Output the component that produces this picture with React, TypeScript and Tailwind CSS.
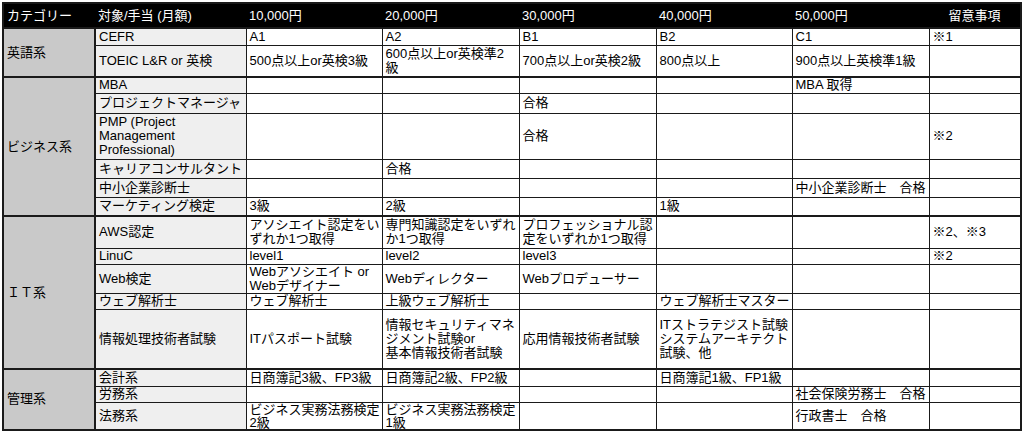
type Item = { label: string; cells: string[]; note?: string; h: string; tight?: boolean };
type Group = { name: string; items: Item[] };

const groups: Group[] = [
  {
    name: "英語系",
    items: [
      { label: "CEFR", cells: ["A1", "A2", "B1", "B2", "C1"], note: "※1", h: "h-[17px]" },
      {
        label: "TOEIC L&R or 英検",
        cells: ["500点以上or英検3級", "600点以上or英検準2\n級", "700点以上or英検2級", "800点以上", "900点以上英検準1級"],
        h: "h-[32px]",
      },
    ],
  },
  {
    name: "ビジネス系",
    items: [
      { label: "MBA", cells: ["", "", "", "", "MBA 取得"], h: "h-[16px]" },
      { label: "プロジェクトマネージャ", cells: ["", "", "合格", "", ""], h: "h-[20px]" },
      { label: "PMP (Project\nManagement\nProfessional)", cells: ["", "", "合格", "", ""], note: "※2", h: "h-[46px]" },
      { label: "キャリアコンサルタント", cells: ["", "合格", "", "", ""], h: "h-[19px]" },
      { label: "中小企業診断士", cells: ["", "", "", "", "中小企業診断士　合格"], h: "h-[19px]" },
      { label: "マーケティング検定", cells: ["3級", "2級", "", "1級", ""], h: "h-[19px]" },
    ],
  },
  {
    name: "ＩＴ系",
    items: [
      {
        label: "AWS認定",
        cells: ["アソシエイト認定をい\nずれか1つ取得", "専門知識認定をいずれ\nか1つ取得", "プロフェッショナル認\n定をいずれか1つ取得", "", ""],
        note: "※2、※3",
        h: "h-[32px]",
      },
      { label: "LinuC", cells: ["level1", "level2", "level3", "", ""], note: "※2", h: "h-[16px]" },
      { label: "Web検定", cells: ["Webアソシエイト or\nWebデザイナー", "Webディレクター", "Webプロデューサー", "", ""], h: "h-[29px]" },
      { label: "ウェブ解析士", cells: ["ウェブ解析士", "上級ウェブ解析士", "", "ウェブ解析士マスター", ""], h: "h-[16px]" },
      {
        label: "情報処理技術者試験",
        cells: [
          "ITパスポート試験",
          "情報セキュリティマネ\nジメント試験or\n基本情報技術者試験",
          "応用情報技術者試験",
          "ITストラテジスト試験\nシステムアーキテクト\n試験、他",
          "",
        ],
        h: "h-[60px]",
      },
    ],
  },
  {
    name: "管理系",
    items: [
      { label: "会計系", cells: ["日商簿記3級、FP3級", "日商簿記2級、FP2級", "", "日商簿記1級、FP1級", ""], h: "h-[17px]" },
      { label: "労務系", cells: ["", "", "", "", "社会保険労務士　合格"], h: "h-[16px]" },
      {
        label: "法務系",
        cells: ["ビジネス実務法務検定\n2級", "ビジネス実務法務検定\n1級", "", "", "行政書士　合格"],
        h: "h-[26px]",
        tight: true,
      },
    ],
  },
];

const headers = ["10,000円", "20,000円", "30,000円", "40,000円", "50,000円"];

const cell = "border border-[#1a1a1a] px-[3px] py-0 align-middle whitespace-pre text-left";

// each line gets a fixed box so mixed Latin/CJK fonts don't grow the row
function Lines({ text, tight }: { text: string; tight?: boolean }) {
  if (!text) return null;
  return (
    <>
      {text.split("\n").map((line, i) => (
        <div key={i} className={tight ? "h-[13px] leading-[13px]" : "h-[14px] leading-[14px]"}>
          {line}
        </div>
      ))}
    </>
  );
}

export default function App() {
  return (
    <div
      className="w-[1024px] h-[433px] overflow-hidden bg-white p-[2px] text-black text-[13px] leading-[14px]"
      style={{ fontFamily: '"Liberation Sans", "Noto Sans CJK JP", sans-serif' }}
    >
      <table className="table-fixed border-collapse border-2 border-[#1a1a1a] w-[1018px]">
        <colgroup>
          <col className="w-[92px]" />
          <col className="w-[151px]" />
          <col className="w-[136px]" />
          <col className="w-[137px]" />
          <col className="w-[137px]" />
          <col className="w-[136px]" />
          <col className="w-[137px]" />
          <col className="w-[92px]" />
        </colgroup>
        <thead>
          <tr className="h-[25px] bg-black text-white">
            <th className="px-[3px] text-left font-normal">カテゴリー</th>
            <th className="px-[3px] text-left font-normal">対象/手当 (月額)</th>
            {headers.map((h) => (
              <th key={h} className="px-[3px] text-left font-normal">
                {h}
              </th>
            ))}
            <th className="px-[3px] text-center font-normal">留意事項</th>
          </tr>
        </thead>
        <tbody>
          {groups.map((g) =>
            g.items.map((item, i) => {
              const top = i === 0 ? "border-t-2" : "";
              return (
                <tr key={g.name + item.label} className={item.h}>
                  {i === 0 && (
                    <td rowSpan={g.items.length} className={`${cell} border-r-2 border-t-2 bg-[#c9c9c9]`}>
                      <Lines text={g.name} />
                    </td>
                  )}
                  <td className={`${cell} ${top} bg-[#efefef]`}>
                    <Lines text={item.label} />
                  </td>
                  {item.cells.map((c, j) => (
                    <td key={j} className={`${cell} ${top} bg-white`}>
                      <Lines text={c} tight={item.tight} />
                    </td>
                  ))}
                  <td className={`${cell} ${top} bg-white`}>
                    <Lines text={item.note ?? ""} />
                  </td>
                </tr>
              );
            })
          )}
        </tbody>
      </table>
    </div>
  );
}
